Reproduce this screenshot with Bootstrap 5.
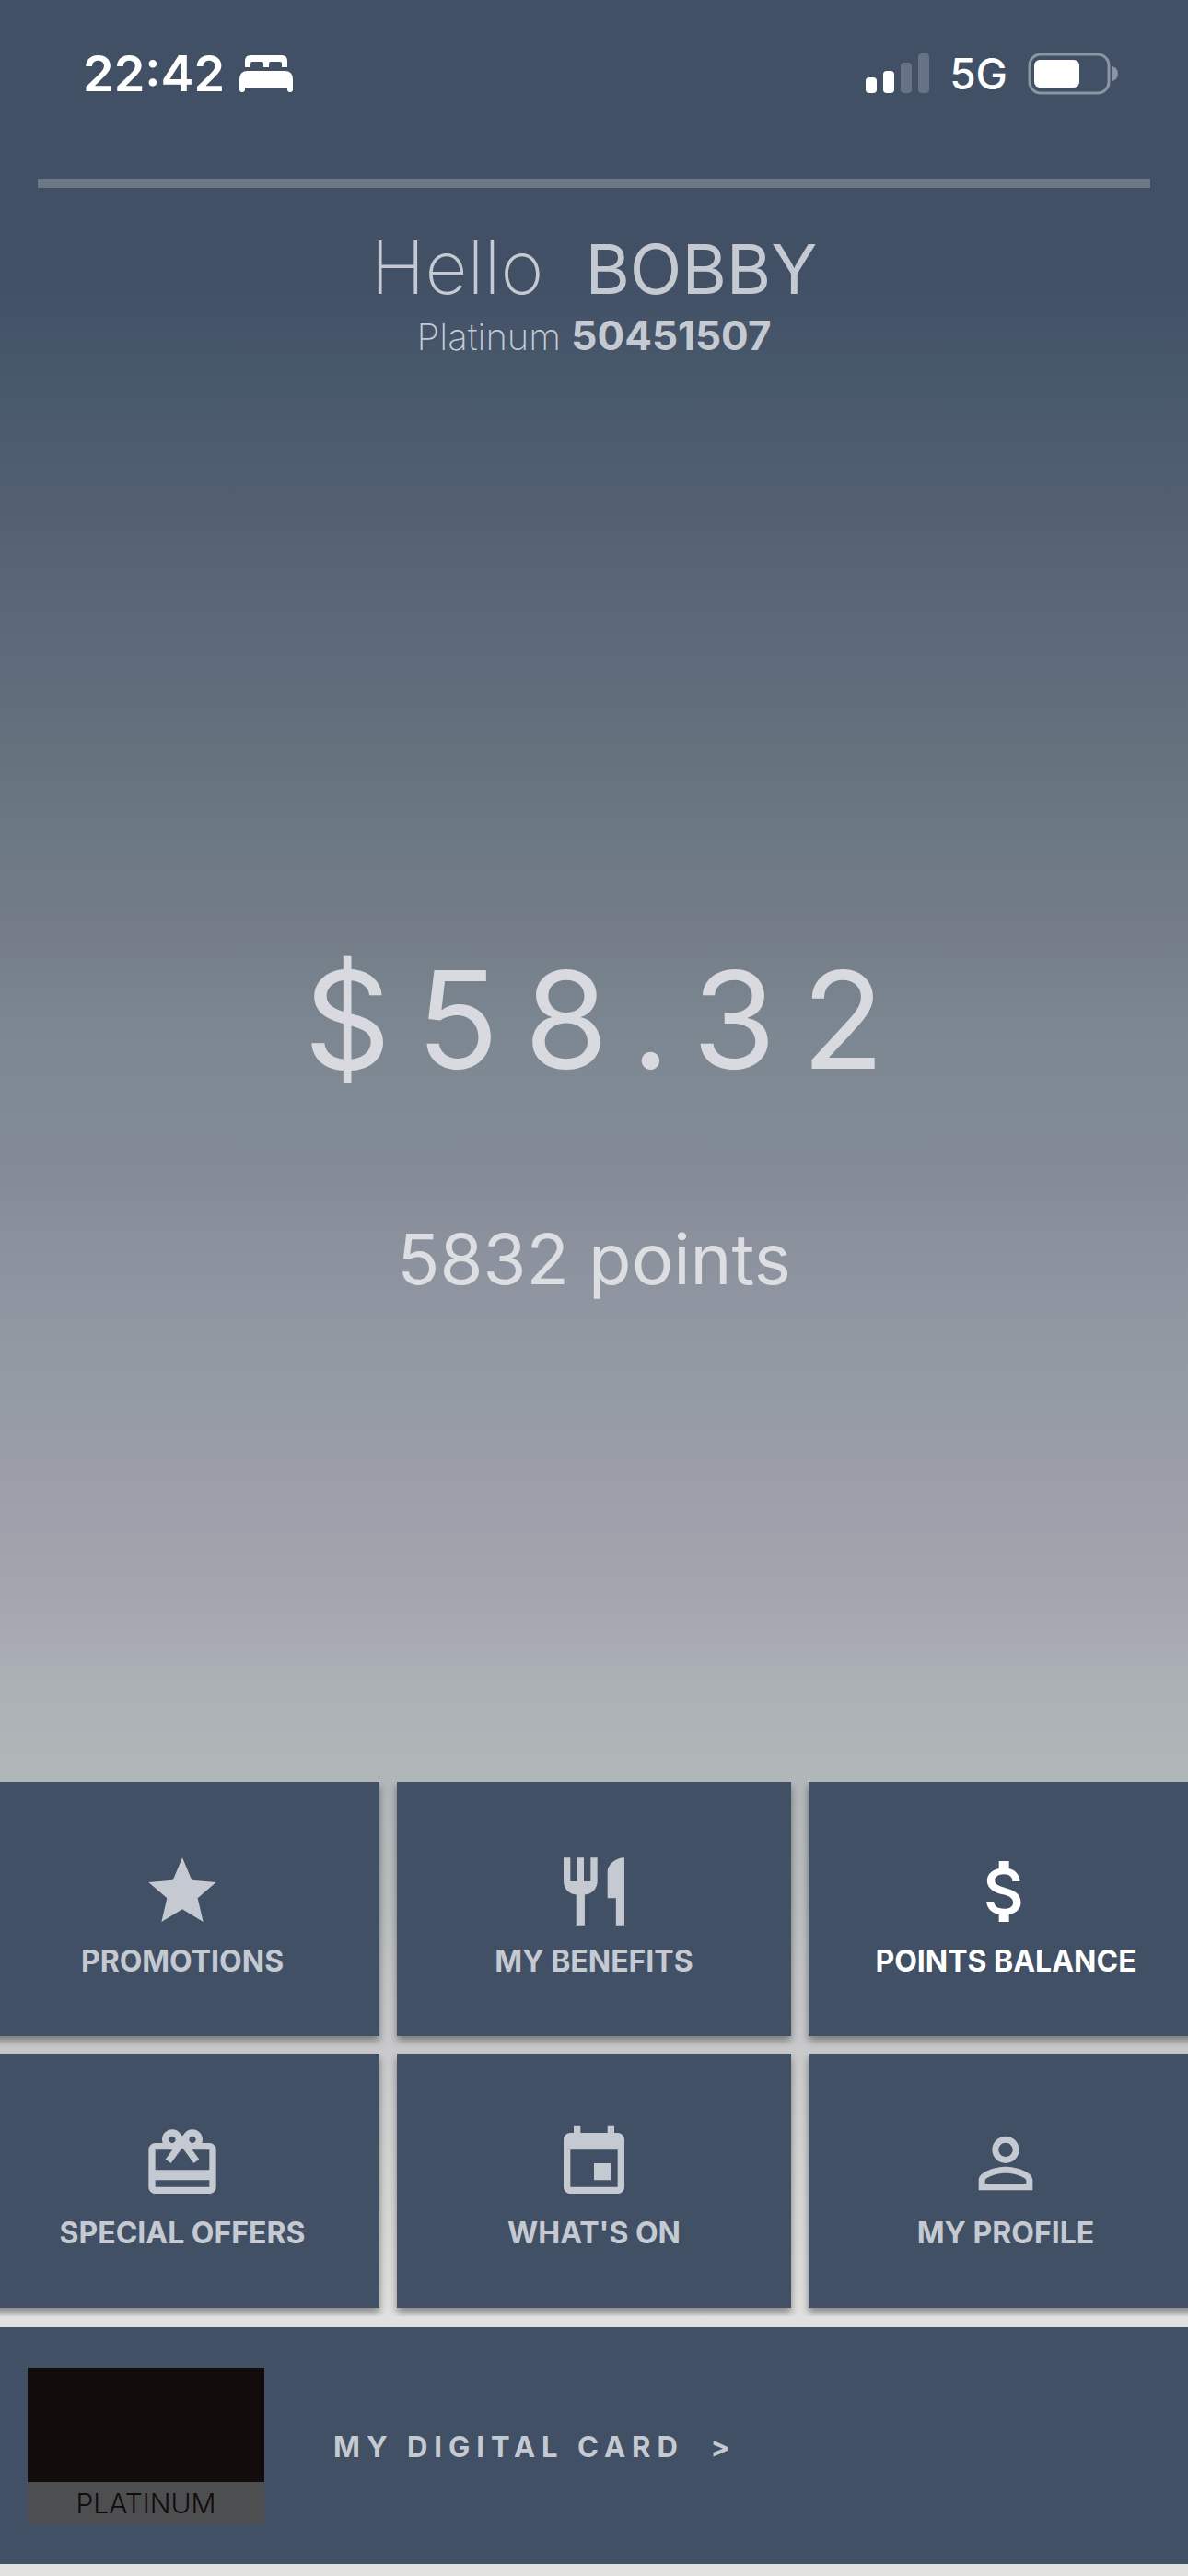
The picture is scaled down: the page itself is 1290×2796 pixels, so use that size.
<!DOCTYPE html>
<html lang="en">
<head>
<meta charset="utf-8">
<meta name="viewport" content="width=device-width, initial-scale=1">
<title>Points Balance</title>
<link rel="stylesheet" href="https://cdn.jsdelivr.net/npm/bootstrap@5.3.0/dist/css/bootstrap.min.css">
<style>
  :root { --navy: #415065; --soft: #c5cad2; }
  body {
    font-family: Inter, "Liberation Sans", sans-serif;
    line-height: 1;
    color: var(--soft);
    background: linear-gradient(to bottom, #415065 0%, #425066 11%, #47576a 14%, #4e5d70 18%, #576273 21%, #5e697a 25%, #65717d 29%, #6b7884 32%, #737c87 36%, #7c8791 40%, #808b95 44%, #848996 45%, #8e95a0 50%, #939ba4 54%, #9b9da8 57%, #a1a4ad 61%, #a8abb4 64%, #aab0b3 65%, #b1b7b9 69%, #b9bdbe 74%, #c8c8ca 79%, #d2d4d2 84%, #dddddb 89%, #e1e1df 90%);
  }
  .statusbar { height: 194px; padding: 43px 74px 0 90px; color: #fff; }
  .statusbar-row { height: 74px; }
  .clock { font-size: 54px; font-weight: 600; }
  .network { font-size: 46px; font-weight: 500; margin: 0 22px; }
  .rule { height: 10px; margin: 0 41px; background: #6d7886; }
  .greeting { padding-top: 42px; }
  .hello { font-size: 80px; font-weight: 200; line-height: 88px; }
  .member { font-size: 74px; }
  .tier { font-size: 40px; font-weight: 200; line-height: 56px; }
  .tier-number { font-size: 44px; }
  .balance { color: #d9dadf; padding-top: 100px; }
  .dollars { font-size: 147px; letter-spacing: 28px; padding-left: 28px; line-height: 180px; }
  .points { font-size: 76px; line-height: 90px; margin-top: 124px; color: #dcdee1; }
  .tiles { margin: 0 -16px; display: grid; grid-template-columns: repeat(3, 1fr); gap: 19px; padding-bottom: 9px; }
  .tiles-clip { overflow: hidden; }
  .tile {
    height: 276px; padding-top: 75px; background: var(--navy); color: var(--soft);
    font-size: 32px; font-weight: 700; box-shadow: 0 5px 8px rgba(0,0,0,.4);
  }
  .tile svg { width: 88px; height: 88px; fill: currentColor; margin-bottom: 16px; }
  .tile.active { color: #fff; }
  .strip { background: #e1e1df; padding: 12px 0 13px; }
  .digital { height: 257px; padding: 0 30px; background: var(--navy); color: var(--soft); }
  .digital-text { font-size: 31px; font-weight: 700; letter-spacing: 7px; margin-left: 75px; padding-top: 2px; white-space: pre; }
  .tier-card { width: 257px; background: #120c0c; padding-top: 124px; }
  .tier-name { height: 46px; background: #4d4e50; color: #120c0c; font-size: 30px; font-weight: 300; }
</style>
<script src="https://cdn.jsdelivr.net/npm/bootstrap@5.3.0/dist/js/bootstrap.bundle.min.js"></script>
</head>
<body class="min-vh-100 d-flex flex-column">
<header>
  <div class="statusbar">
    <div class="statusbar-row d-flex align-items-center justify-content-between">
      <div class="d-flex align-items-center gap-3">
        <span class="clock">22:42</span>
        <svg width="58" height="40" viewBox="0 0 58 40" fill="#fff" aria-label="Sleep mode"><path d="M6 13V6q0-6 6-6h34q6 0 6 6v7h-6V9q0-2-2-2H34q-2 0-2 2v4h-6V9q0-2-2-2H14q-2 0-2 2v4zM0 26q0-9 9-9h40q9 0 9 9v11q0 3-3 3t-3-3v-2H6v2q0 3-3 3t-3-3z"/></svg>
      </div>
      <div class="d-flex align-items-center">
        <svg width="69" height="46" viewBox="0 0 69 46" fill="#fff" aria-label="Signal"><rect y="27" width="12" height="17" rx="4"/><rect x="19" y="20" width="12" height="24" rx="4"/><g opacity=".2"><rect x="38" y="11" width="12" height="33" rx="4"/><rect x="57" y="1" width="12" height="43" rx="4"/></g></svg>
        <span class="network">5G</span>
        <svg width="100" height="46" viewBox="0 0 100 46" aria-label="Battery"><rect x="2" y="2" width="86" height="42" rx="12" fill="none" stroke="#8c95a2" stroke-width="3"/><rect x="7" y="8" width="49" height="30" rx="6" fill="#fff"/><path d="M92 15q6 2 6 8t-6 8z" fill="#8c95a2"/></svg>
      </div>
    </div>
  </div>
  <div class="rule"></div>
</header>

<section class="greeting text-center">
  <h1 class="hello mb-0">Hello&nbsp; <span class="member fw-normal">BOBBY</span></h1>
  <p class="tier mb-0">Platinum <strong class="tier-number fw-bold">50451507</strong></p>
</section>

<main class="balance flex-grow-1 d-flex flex-column align-items-center justify-content-center">
  <div class="dollars">$58.32</div>
  <div class="points">5832 points</div>
</main>

<nav class="tiles-clip" aria-label="Member menu">
  <div class="tiles">
    <a href="#" class="tile d-flex flex-column align-items-center text-decoration-none">
      <svg viewBox="0 0 24 24"><path d="M12 17.270L18.180 21l-1.640-7.030L22 9.240l-7.190-.61L12 2 9.190 8.630 2 9.240l5.460 4.730L5.820 21z"/></svg>PROMOTIONS</a>
    <a href="#" class="tile d-flex flex-column align-items-center text-decoration-none">
      <svg viewBox="0 0 24 24"><path d="M11 9H9V2H7v7H5V2H3v7c0 2.120 1.660 3.840 3.750 3.970V22h2.500v-9.030C11.340 12.840 13 11.120 13 9V2h-2v7zm5-3v8h2.500v8H21V2c-2.760 0-5 2.240-5 4z"/></svg>MY BENEFITS</a>
    <a href="#" class="tile active d-flex flex-column align-items-center text-decoration-none" aria-current="page">
      <svg viewBox="0 0 24 24"><path d="M11.800 10.900c-2.270-.59-3-1.200-3-2.150 0-1.090 1.010-1.850 2.700-1.850 1.780 0 2.440.85 2.500 2.100h2.210c-.07-1.720-1.120-3.300-3.210-3.810V3h-3v2.160c-1.940.42-3.500 1.680-3.500 3.610 0 2.310 1.910 3.460 4.700 4.130 2.500.6 3 1.480 3 2.410 0 .69-.49 1.790-2.700 1.790-2.060 0-2.870-.92-2.980-2.100h-2.200c.12 2.190 1.760 3.420 3.680 3.830V21h3v-2.150c1.950-.37 3.500-1.500 3.500-3.550 0-2.840-2.430-3.810-4.700-4.400z"/></svg>POINTS BALANCE</a>
    <a href="#" class="tile d-flex flex-column align-items-center text-decoration-none">
      <svg viewBox="0 0 24 24"><path d="M20 6h-2.180c.11-.31.18-.65.18-1 0-1.660-1.340-3-3-3-1.050 0-1.960.54-2.500 1.350l-.5.67-.5-.68C10.960 2.540 10.050 2 9 2 7.340 2 6 3.340 6 5c0 .35.07.69.18 1H4c-1.110 0-1.990.89-1.990 2L2 19c0 1.110.89 2 2 2h16c1.110 0 2-.89 2-2V8c0-1.110-.89-2-2-2zm-5-2c.55 0 1 .45 1 1s-.45 1-1 1-1-.45-1-1 .45-1 1-1zM9 4c.55 0 1 .45 1 1s-.45 1-1 1-1-.45-1-1 .45-1 1-1zm11 15H4v-2h16v2zm0-5H4V8h5.080L7 10.830 8.620 12 11 8.760l1-1.360 1 1.360L15.380 12 17 10.830 14.920 8H20v6z"/></svg>SPECIAL OFFERS</a>
    <a href="#" class="tile d-flex flex-column align-items-center text-decoration-none">
      <svg viewBox="0 0 24 24"><path d="M17 12h-5v5h5v-5zM16 1v2H8V1H6v2H5c-1.110 0-1.990.9-1.990 2L3 19c0 1.100.89 2 2 2h14c1.100 0 2-.9 2-2V5c0-1.100-.9-2-2-2h-1V1h-2zm3 18H5V8h14v11z"/></svg>WHAT'S ON</a>
    <a href="#" class="tile d-flex flex-column align-items-center text-decoration-none">
      <svg viewBox="0 0 24 24"><path d="M12 5.900c1.160 0 2.100.94 2.100 2.100s-.94 2.100-2.100 2.100S9.900 9.160 9.900 8s.94-2.100 2.100-2.100m0 9c2.970 0 6.100 1.460 6.100 2.100v1.100H5.900V17c0-.64 3.130-2.100 6.100-2.100M12 4C9.790 4 8 5.790 8 8s1.790 4 4 4 4-1.790 4-4-1.790-4-4-4zm0 9c-2.670 0-8 1.340-8 4v3h16v-3c0-2.660-5.330-4-8-4z"/></svg>MY PROFILE</a>
  </div>
</nav>

<footer class="strip">
  <a href="#" class="digital d-flex align-items-center text-decoration-none">
    <span class="tier-card"><span class="tier-name d-flex align-items-center justify-content-center">PLATINUM</span></span>
    <span class="digital-text">MY DIGITAL CARD  &gt;</span>
  </a>
</footer>
</body>
</html>
